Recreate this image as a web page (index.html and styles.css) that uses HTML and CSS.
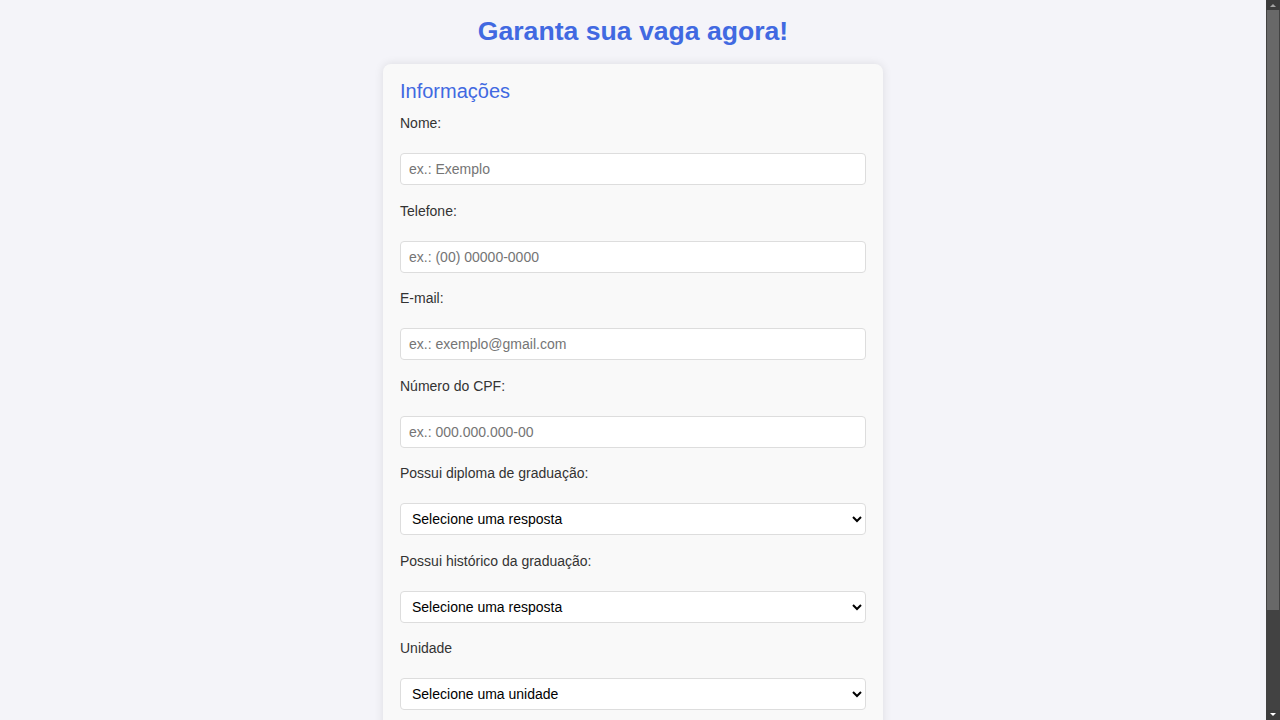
FILE: index.html
```html
<!DOCTYPE html>
<html lang="pt-BR">
<head>
<meta charset="UTF-8">
<title>Garanta sua vaga agora!</title>
<link rel="stylesheet" href="styles.css">
</head>
<body>
<div class="app">
  <div class="page">
    <h1 class="title">Garanta sua vaga agora!</h1>
    <form class="card">
      <h2 class="section-title">Informações</h2>
      <div class="field">
        <label class="label" for="nome">Nome:</label>
        <input class="control" id="nome" type="text" placeholder="ex.: Exemplo">
      </div>
      <div class="field">
        <label class="label" for="tel">Telefone:</label>
        <input class="control" id="tel" type="text" placeholder="ex.: (00) 00000-0000">
      </div>
      <div class="field">
        <label class="label" for="email">E-mail:</label>
        <input class="control" id="email" type="text" placeholder="ex.: exemplo@gmail.com">
      </div>
      <div class="field">
        <label class="label" for="cpf">Número do CPF:</label>
        <input class="control" id="cpf" type="text" placeholder="ex.: 000.000.000-00">
      </div>
      <div class="field">
        <label class="label" for="diploma">Possui diploma de graduação:</label>
        <select class="control select" id="diploma">
          <option>Selecione uma resposta</option>
          <option>Sim</option>
          <option>Não</option>
        </select>
      </div>
      <div class="field">
        <label class="label" for="historico">Possui histórico da graduação:</label>
        <select class="control select" id="historico">
          <option>Selecione uma resposta</option>
          <option>Sim</option>
          <option>Não</option>
        </select>
      </div>
      <div class="field">
        <label class="label" for="unidade">Unidade</label>
        <select class="control select" id="unidade">
          <option>Selecione uma unidade</option>
        </select>
      </div>
    </form>
  </div>
  <div class="scrollbar" aria-hidden="true">
    <div class="sb-btn">
      <svg width="14" height="10" viewBox="0 0 14 10"><path d="M4 7 L7 4 L10 7 Z" fill="#a3a3a3"/></svg>
    </div>
    <div class="sb-track"><div class="sb-thumb"></div></div>
    <div class="sb-btn">
      <svg width="14" height="10" viewBox="0 0 14 10"><path d="M4 3 L7 6 L10 3 Z" fill="#ffffff"/></svg>
    </div>
  </div>
</div>
</body>
</html>
```
FILE: styles.css
```css
html, body {
  margin: 0;
  height: 100%;
  overflow: hidden;
  background: #f4f4f9;
}
body {
  font-family: "Liberation Sans", Arial, sans-serif;
  color: #333;
}
.app {
  display: flex;
  height: 100vh;
}
.page {
  flex: 1;
  min-width: 0;
  overflow: hidden;
  padding-top: 15px;
}
.scrollbar {
  width: 14px;
  flex: none;
  display: flex;
  flex-direction: column;
  background: #424242;
}
.sb-btn {
  height: 10px;
  flex: none;
  background: #3c3c3c;
}
.sb-btn svg {
  display: block;
}
.sb-track {
  flex: 1;
  padding: 0 1px;
}
.sb-thumb {
  height: 600px;
  background: #686868;
}
.title {
  margin: 0 0 17px;
  font-size: 26.6px;
  line-height: 32px;
  font-weight: bold;
  color: #4169e1;
  text-align: center;
}
.card {
  box-sizing: border-box;
  width: 500px;
  margin: 0 auto;
  padding: 16px 17px 20px;
  background: #f9f9f9;
  border-radius: 8px;
  box-shadow: 0 0 10px rgba(0, 0, 0, 0.1);
}
.section-title {
  margin: 0 0 12px;
  font-size: 20px;
  line-height: 23px;
  font-weight: normal;
  color: #4169e1;
}
.field {
  margin-bottom: 17.5px;
}
.label {
  display: block;
  font-size: 14px;
  line-height: 16px;
  margin-bottom: 22px;
  color: #333;
}
.control {
  display: block;
  box-sizing: border-box;
  width: 100%;
  height: 32px;
  margin: 0;
  padding: 0 8px;
  font-family: "Liberation Sans", Arial, sans-serif;
  font-size: 14px;
  color: #000;
  background: #fff;
  border: 1px solid #ddd;
  border-radius: 4px;
}
.control::placeholder {
  color: #757575;
}
.select {
  padding: 0 4px 0 7px;
}
```
